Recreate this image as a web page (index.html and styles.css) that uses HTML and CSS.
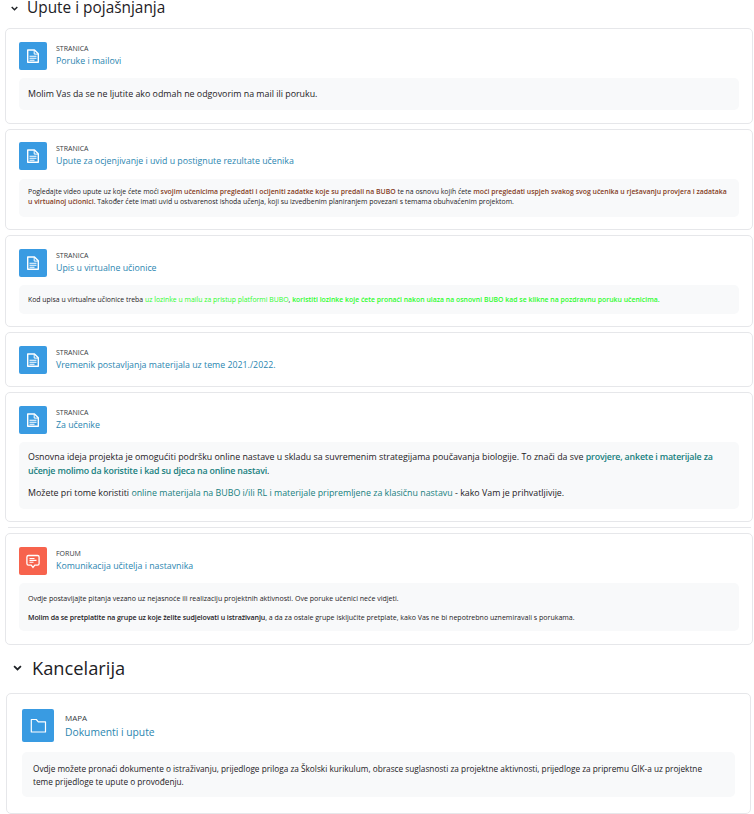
FILE: index.html
```html
<!DOCTYPE html>
<html lang="en">

<head>
    <meta charset="UTF-8">
    <meta name="viewport" content="width=device-width, initial-scale=1.0">
    <title>Upute i pojašnjanja</title>
    <link rel="stylesheet" href="styles.css">
</head>

<body>
    <svg class="defs" width="0" height="0">
        <symbol id="page" viewBox="0 0 28 28">
            <path d="M8.7 8h6.800l3.800 3.800v8.400H8.700z" fill="none" stroke="#fff" stroke-width="1.4" stroke-linejoin="round"/>
            <path d="M15.200 8.200v3.900h3.900" fill="none" stroke="#fff" stroke-width="1"/>
            <path d="M10.500 14.300h7M10.500 16.300h7M10.500 18.300h5" stroke="#fff" stroke-width="1.100"/>
        </symbol>
    </svg>

    <h2 class="section-title first">
        <svg class="chevron" viewBox="0 0 10 7"><path d="M1 1.200l4 4 4-4" fill="none" stroke="#1d2125" stroke-width="2"/></svg>
        Upute i pojašnjanja
    </h2>

    <div class="card">
        <div class="head">
            <div class="icon blue"><svg viewBox="0 0 28 28"><use href="#page"/></svg></div>
            <div>
                <div class="type">STRANICA</div>
                <a class="name" href="#">Poruke i mailovi</a>
            </div>
        </div>
        <div class="desc one">Molim Vas da se ne ljutite ako odmah ne odgovorim na mail ili poruku.</div>
    </div>

    <div class="card">
        <div class="head">
            <div class="icon blue"><svg viewBox="0 0 28 28"><use href="#page"/></svg></div>
            <div>
                <div class="type">STRANICA</div>
                <a class="name" href="#">Upute za ocjenjivanje i uvid u postignute rezultate učenika</a>
            </div>
        </div>
        <div class="desc small two">Pogledajte video upute uz koje ćete moći <b class="brown">svojim učenicima pregledati i ocijeniti zadatke koje su predali na BUBO</b> te na osnovu kojih ćete <b class="brown">moći pregledati uspjeh svakog svog učenika u rješavanju provjera i zadataka u virtualnoj učionici</b>. Također ćete imati uvid u ostvarenost ishoda učenja, koji su izvedbenim planiranjem povezani s temama obuhvaćenim projektom.</div>
    </div>

    <div class="card">
        <div class="head">
            <div class="icon blue"><svg viewBox="0 0 28 28"><use href="#page"/></svg></div>
            <div>
                <div class="type">STRANICA</div>
                <a class="name" href="#">Upis u virtualne učionice</a>
            </div>
        </div>
        <div class="desc small three">Kod upisa u virtualne učionice treba <span class="green">uz lozinke u mailu za pristup platformi BUBO</span>, <b class="green">koristiti lozinke koje ćete pronaći nakon ulaza na osnovni BUBO kad se klikne na pozdravnu poruku učenicima.</b></div>
    </div>

    <div class="card">
        <div class="head">
            <div class="icon blue"><svg viewBox="0 0 28 28"><use href="#page"/></svg></div>
            <div>
                <div class="type">STRANICA</div>
                <a class="name" href="#">Vremenik postavljanja materijala uz teme 2021./2022.</a>
            </div>
        </div>
    </div>

    <div class="card">
        <div class="head">
            <div class="icon blue"><svg viewBox="0 0 28 28"><use href="#page"/></svg></div>
            <div>
                <div class="type">STRANICA</div>
                <a class="name" href="#">Za učenike</a>
            </div>
        </div>
        <div class="desc large">
            <p>Osnovna ideja projekta je omogućiti podršku online nastave u skladu sa suvremenim strategijama poučavanja biologije. To znači da sve <b class="teal">provjere, ankete i materijale za učenje molimo da koristite i kad su djeca na online nastavi</b>.</p>
            <p>Možete pri tome koristiti <span class="teal">online materijala na BUBO i/ili RL i materijale pripremljene za klasičnu nastavu</span> - kako Vam je prihvatljivije.</p>
        </div>
    </div>

    <hr class="divider">

    <div class="card">
        <div class="head">
            <div class="icon red">
                <svg viewBox="0 0 28 28">
                    <path d="M9.500 8.500h9c1 0 1.600.6 1.600 1.600v6.500c0 1-.6 1.600-1.600 1.600h-2.700L14 20.400l-1.800-2.200H9.500c-1 0-1.600-.6-1.600-1.600v-6.500c0-1 .6-1.600 1.600-1.600z" fill="none" stroke="#fff" stroke-width="1.300"/>
                    <path d="M10.500 11.500h5M10.500 13.400h7M10.500 15.300h4" stroke="#fff" stroke-width="1.100"/>
                </svg>
            </div>
            <div>
                <div class="type">FORUM</div>
                <a class="name" href="#">Komunikacija učitelja i nastavnika</a>
            </div>
        </div>
        <div class="desc small six">
            <p>Ovdje postavljajte pitanja vezano uz nejasnoće ili realizaciju projektnih aktivnosti. Ove poruke učenici neće vidjeti.</p>
            <p><b class="strong">Molim da se pretplatite na grupe uz koje želite sudjelovati u istraživanju</b>, a da za ostale grupe isključite pretplate, kako Vas ne bi nepotrebno uznemiravali s porukama.</p>
        </div>
    </div>

    <h2 class="section-title second">
        <svg class="chevron" viewBox="0 0 10 7"><path d="M1 1.200l4 4 4-4" fill="none" stroke="#1d2125" stroke-width="2"/></svg>
        Kancelarija
    </h2>

    <div class="card big">
        <div class="head">
            <div class="icon blue">
                <svg viewBox="0 0 32 33">
                    <path d="M9.300 10.500h5l2 2.300h7.200v10.200H9.300z" fill="none" stroke="#fff" stroke-width="1.200" stroke-linejoin="round"/>
                </svg>
            </div>
            <div>
                <div class="type">MAPA</div>
                <a class="name" href="#">Dokumenti i upute</a>
            </div>
        </div>
        <div class="desc">Ovdje možete pronaći dokumente o istraživanju, prijedloge priloga za Školski kurikulum, obrasce suglasnosti za projektne aktivnosti, prijedloge za pripremu GIK-a uz projektne teme prijedloge te upute o provođenju.</div>
    </div>
</body>

</html>
```

FILE: styles.css
```css
body {
    font-family: "Open Sans", sans-serif;
    margin: 0;
    padding: 0 1.5px 0 5px;
    background: #ffffff;
    color: #1d2125;
    font-size: 8.85px;
}

.defs {
    display: block;
}

.section-title {
    font-weight: 400;
    display: flex;
    align-items: center;
    margin: 0;
}

.section-title.first {
    font-size: 15.4px;
    line-height: 16px;
    height: 16px;
    margin-bottom: 12.3px;
    gap: 9px;
    padding-left: 6px;
}

.section-title.second {
    font-size: 18.3px;
    line-height: 28px;
    height: 28px;
    margin-top: 9px;
    margin-bottom: 11px;
    gap: 10px;
    padding-left: 8px;
}

.section-title.first .chevron {
    width: 7px;
    height: 5px;
}

.chevron {
    width: 9px;
    height: 6px;
    flex: none;
}

.card {
    border: 1px solid #e6e7ea;
    border-radius: 5px;
    padding: 12.5px 13px;
    margin-bottom: 5px;
}

.head {
    display: flex;
    align-items: center;
    gap: 9px;
}

.icon {
    width: 28px;
    height: 28px;
    border-radius: 2px;
    flex: none;
}

.icon svg {
    display: block;
    width: 100%;
    height: 100%;
}

.blue {
    background: #399be2;
}

.red {
    background: #f7634d;
}

.type {
    font-size: 7px;
    line-height: 10px;
    color: #343a40;
}

.name {
    display: block;
    font-size: 8.8px;
    line-height: 14px;
    color: #2b86b0;
    text-decoration: none;
}

.desc {
    background: #f8f9fa;
    border-radius: 5px;
    margin-top: 8.5px;
    padding: 9px;
}

.desc p {
    margin: 0;
}

.desc.one {
    line-height: 14px;
}

.desc.small {
    font-size: 6.9px;
    line-height: 10px;
}

.desc.two {
    padding: 8.4px 9px 9.8px;
}

.desc.three {
    padding: 9.2px 9px;
}

.desc.six {
    font-size: 7.05px;
    padding: 9.5px 9px;
}

.desc.six p + p {
    margin-top: 9px;
}

.desc.large {
    line-height: 14px;
    padding: 8px 9px 8.7px;
}

.desc.large p + p {
    margin-top: 7.6px;
}

.brown {
    color: #843c24;
    font-weight: 600;
}

.green {
    color: #2efc2e;
}

b.green {
    font-weight: 600;
}

.teal {
    color: #17807e;
}

b.teal {
    font-weight: 600;
    letter-spacing: -0.17px;
}

.strong {
    font-weight: 600;
    letter-spacing: -0.09px;
}

.divider {
    border: 0;
    border-top: 1px solid #e6e7ea;
    margin: 0 2px 5px 3px;
}

.card.big {
    margin: 0 2px 0 1px;
    padding: 15px 15px 15.6px;
}

.card.big .icon {
    width: 32px;
    height: 33px;
}

.card.big .head {
    gap: 11px;
}

.card.big .type {
    font-size: 8px;
    line-height: 13px;
}

.card.big .name {
    font-size: 10.3px;
    line-height: 16px;
}

.card.big .desc {
    font-size: 8.25px;
    line-height: 13px;
    padding: 9.5px 14px 9.5px 11px;
    margin-top: 10.4px;
}
```
